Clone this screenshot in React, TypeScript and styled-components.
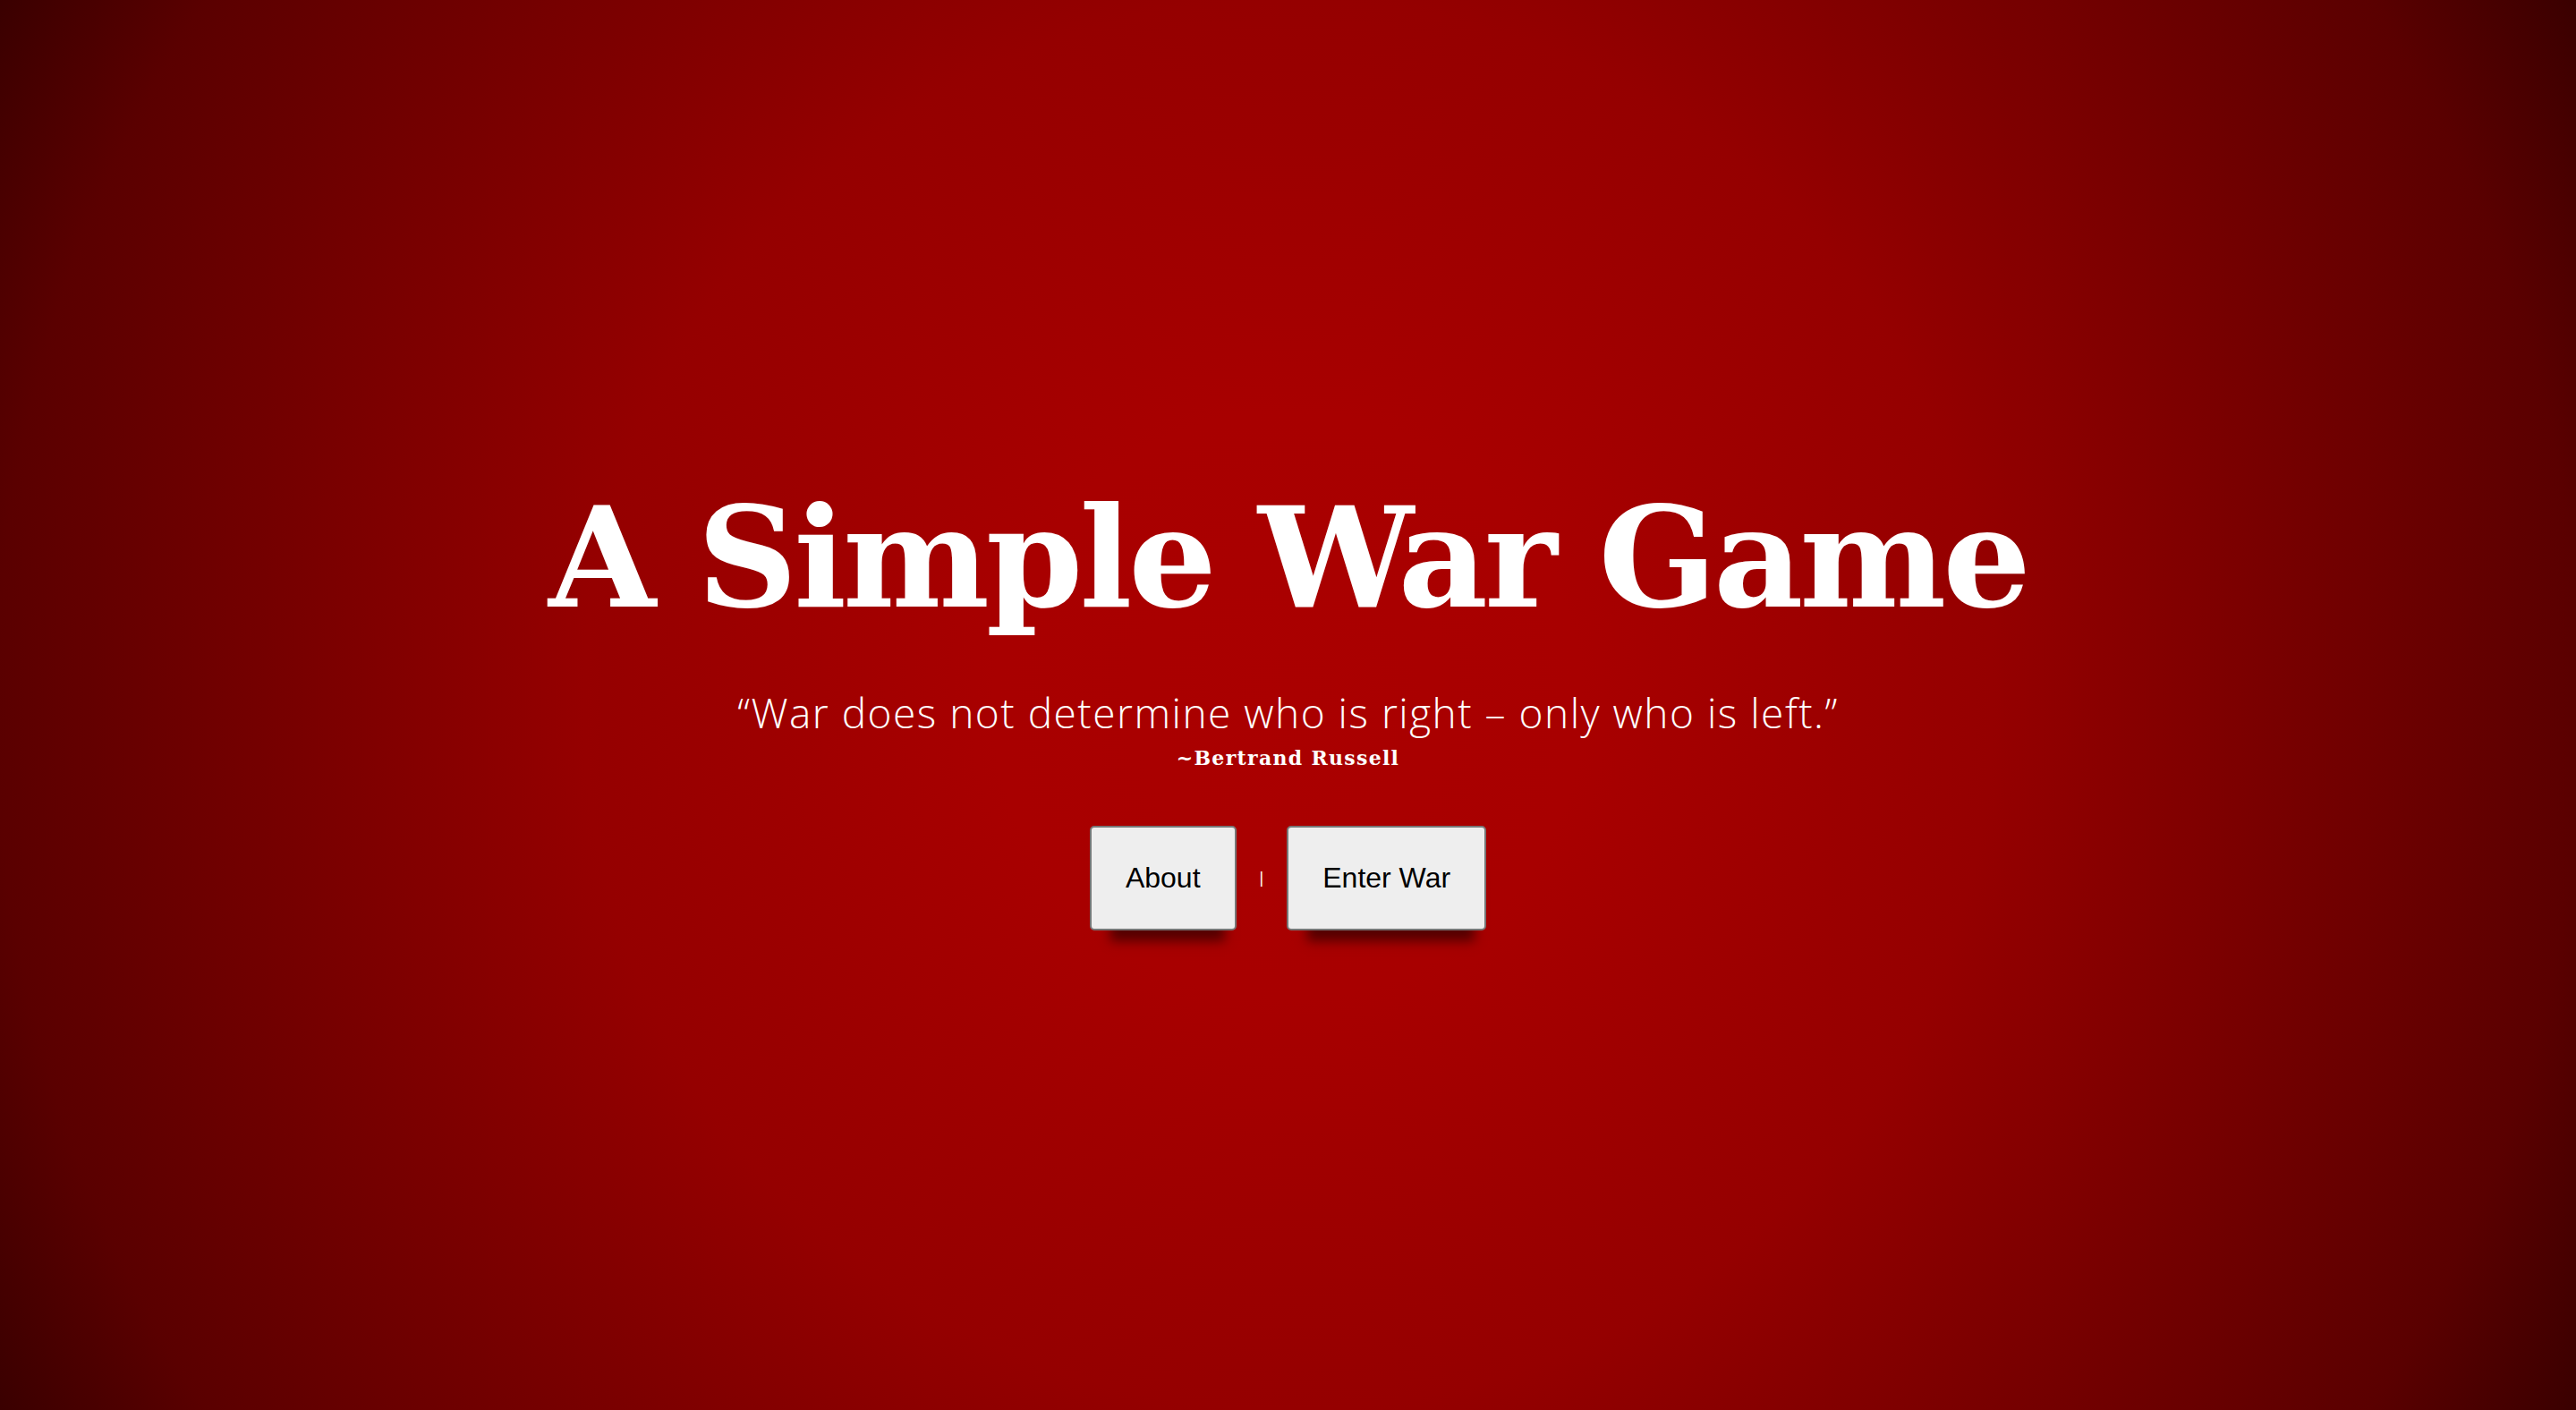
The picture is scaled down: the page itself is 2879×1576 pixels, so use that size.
import React from 'react'
import styled, { createGlobalStyle } from 'styled-components'

const GlobalStyle = createGlobalStyle`
    html, body {
        margin: 0;
        padding: 0;
        height: 100%;
    }
`

export default function App() {
    return (
    <>
        <GlobalStyle />
        <Page>
            <Title>A Simple War Game</Title>
            <Quote>“War does not determine who is right – only who is left.”</Quote>
            <Author>~Bertrand Russell</Author>
            <Actions>
                <MenuButton>About</MenuButton>
                <Divider>|</Divider>
                <MenuButton>Enter War</MenuButton>
            </Actions>
        </Page>
    </>
    )
}

const Page = styled.div`
    box-sizing: border-box;
    display: flex;
    flex-direction: column;
    align-items: center;
    justify-content: center;
    width: 100vw;
    height: 100vh;
    padding-top: 10px;
    background: radial-gradient(circle farthest-corner at 50% 50%, #aa0000 0%, #a80000 20%, #950000 48%, #5a0000 88%, #3a0000 100%);
    color: white;
`

const Title = styled.h1`
    margin: 0;
    font-family: "DejaVu Serif", "Liberation Serif", serif;
    font-weight: bold;
    font-size: 155px;
    line-height: 1;
    letter-spacing: -4px;
`

const Quote = styled.p`
    margin: 68px 0 0;
    font-family: "Open Sans", sans-serif;
    font-weight: 300;
    font-size: 46px;
    line-height: 1.2;
    letter-spacing: 1.5px;
`

const Author = styled.p`
    margin: 10px 0 0;
    font-family: "DejaVu Serif", "Liberation Serif", serif;
    font-weight: bold;
    font-size: 22px;
    line-height: 1.2;
    letter-spacing: 1.3px;
`

const Actions = styled.div`
    display: flex;
    align-items: center;
    margin-top: 62px;
`

const MenuButton = styled.button`
    padding: 38px;
    background: #eeeeee;
    border: 2px solid #777777;
    border-radius: 5px;
    box-shadow: 5px 30px 12px -18px rgba(0, 0, 0, 0.5);

    font-family: "Liberation Sans", Arial, sans-serif;
    font-size: 32px;
    line-height: 37px;
    color: black;
    cursor: pointer;
`

const Divider = styled.span`
    margin: 0 26px;
    font-family: "Liberation Sans", Arial, sans-serif;
    font-size: 18px;
    color: white;
`
